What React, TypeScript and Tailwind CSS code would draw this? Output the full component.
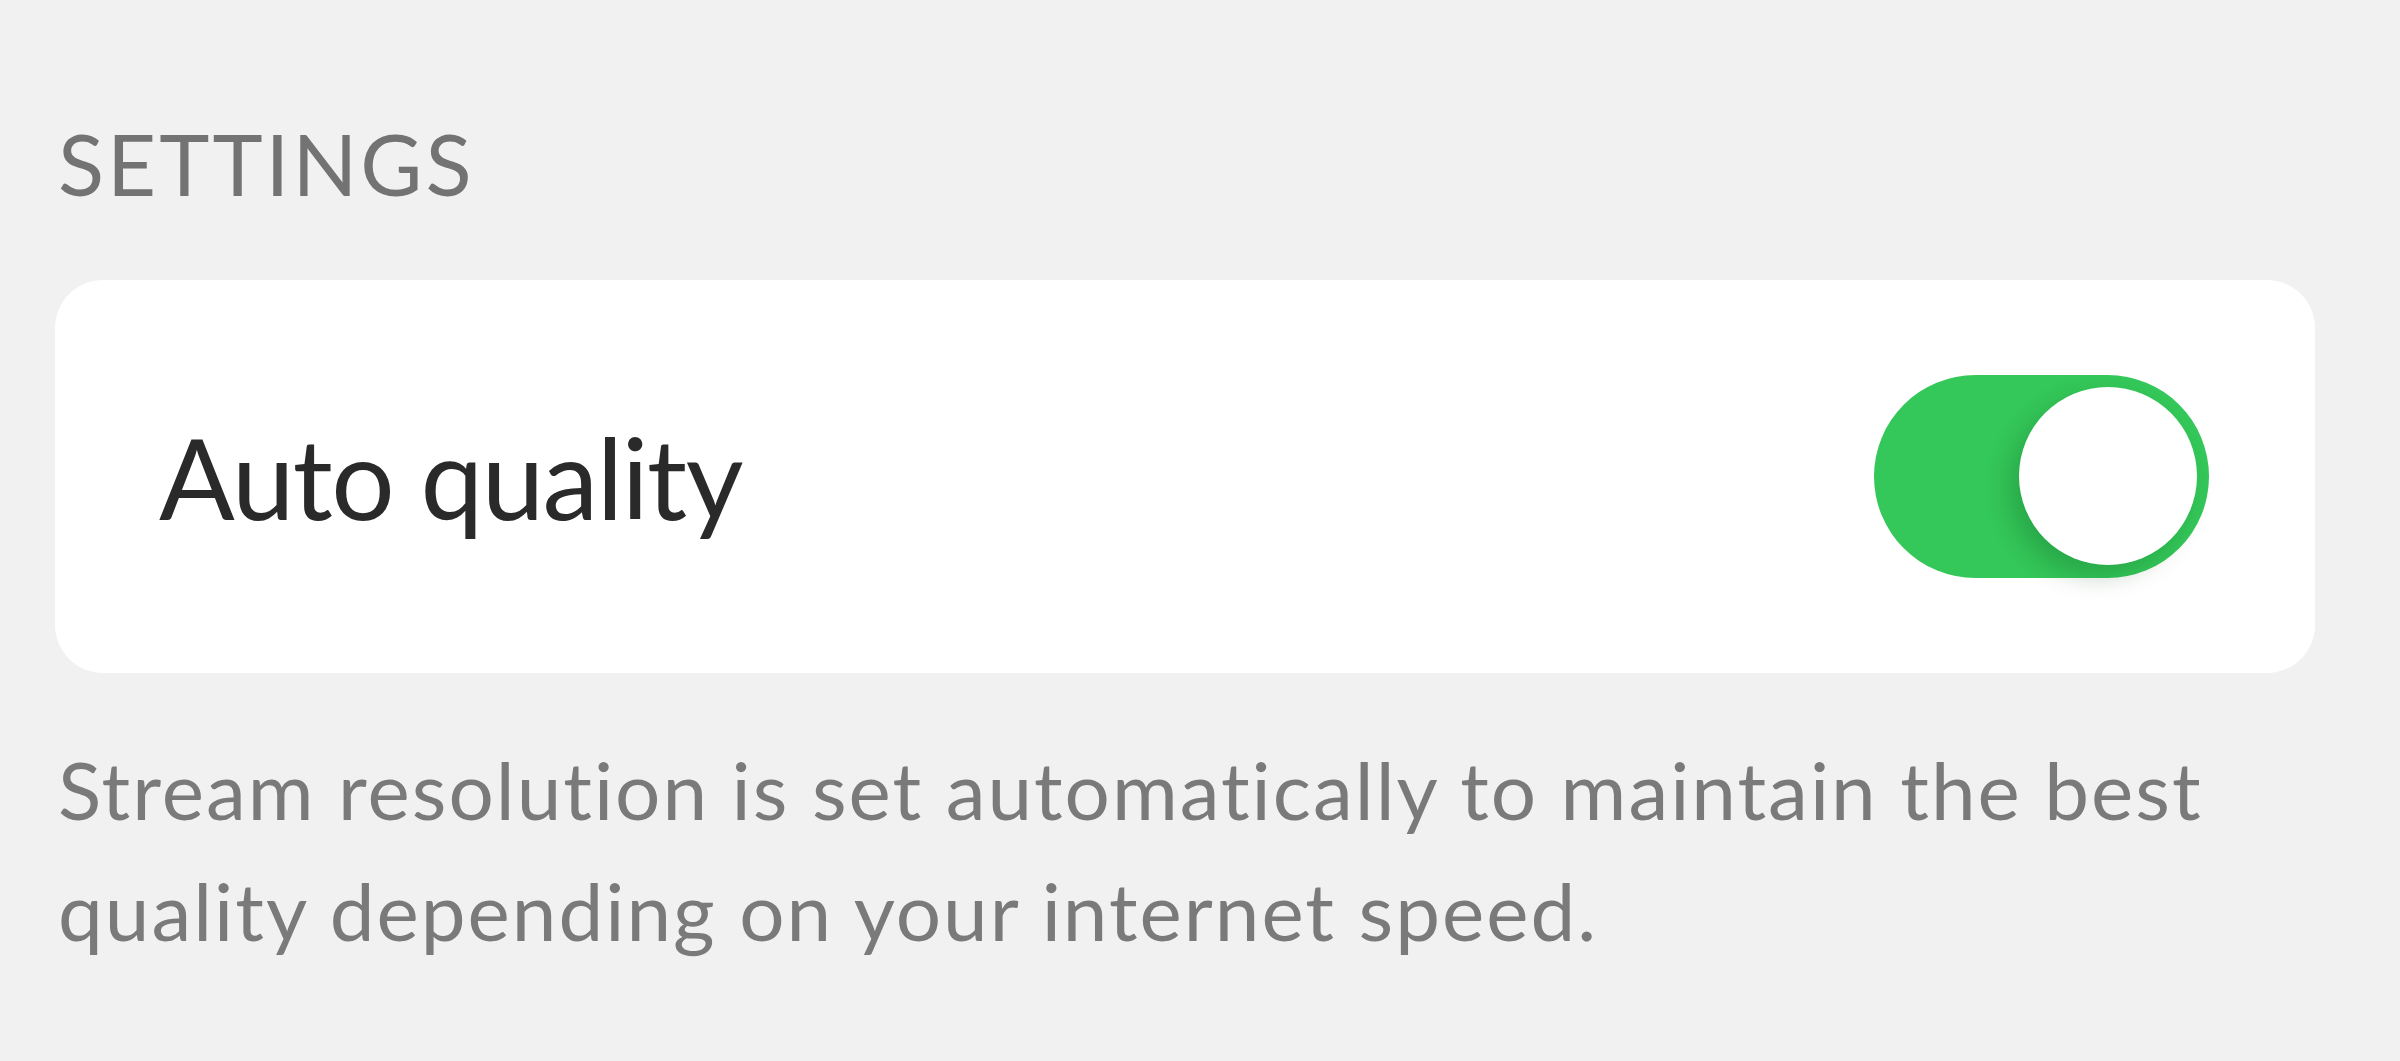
import { useState } from "react";

function Toggle({ on, onChange }: { on: boolean; onChange: (v: boolean) => void }) {
  return (
    <button
      onClick={() => onChange(!on)}
      className={`relative h-[203px] w-[335px] shrink-0 rounded-full transition-colors ${
        on ? "bg-[#34c759]" : "bg-[#e5e5ea]"
      }`}
    >
      <span
        className={`absolute top-[12px] h-[178px] w-[178px] rounded-full bg-white shadow-[-10px_12px_24px_rgba(0,60,20,0.22)] transition-all ${
          on ? "left-[145px]" : "left-[12px]"
        }`}
      />
    </button>
  );
}

export default function App() {
  const [auto, setAuto] = useState(true);

  return (
    <div className="min-h-screen w-full bg-[#f1f1f1] px-[55px] pt-[112px] font-['Lato',sans-serif] [font-variant-ligatures:none]">
      <h2 className="pl-[3px] text-[85px] leading-[102px] tracking-[3px] text-[#737373]">SETTINGS</h2>

      <div className="mt-[66px] flex h-[393px] w-[2260px] items-center justify-between rounded-[48px] bg-white pl-[104px] pr-[106px]">
        <span className="text-[112px] leading-none tracking-[-1.5px] text-[#2a2a2a]">Auto quality</span>
        <Toggle on={auto} onChange={setAuto} />
      </div>

      <p className="mt-[56px] w-[2260px] pl-[3px] text-[80px] leading-[121px] tracking-[2px] text-[#7a7a7a]">
        Stream resolution is set automatically to maintain the best quality depending on your internet speed.
      </p>
    </div>
  );
}
